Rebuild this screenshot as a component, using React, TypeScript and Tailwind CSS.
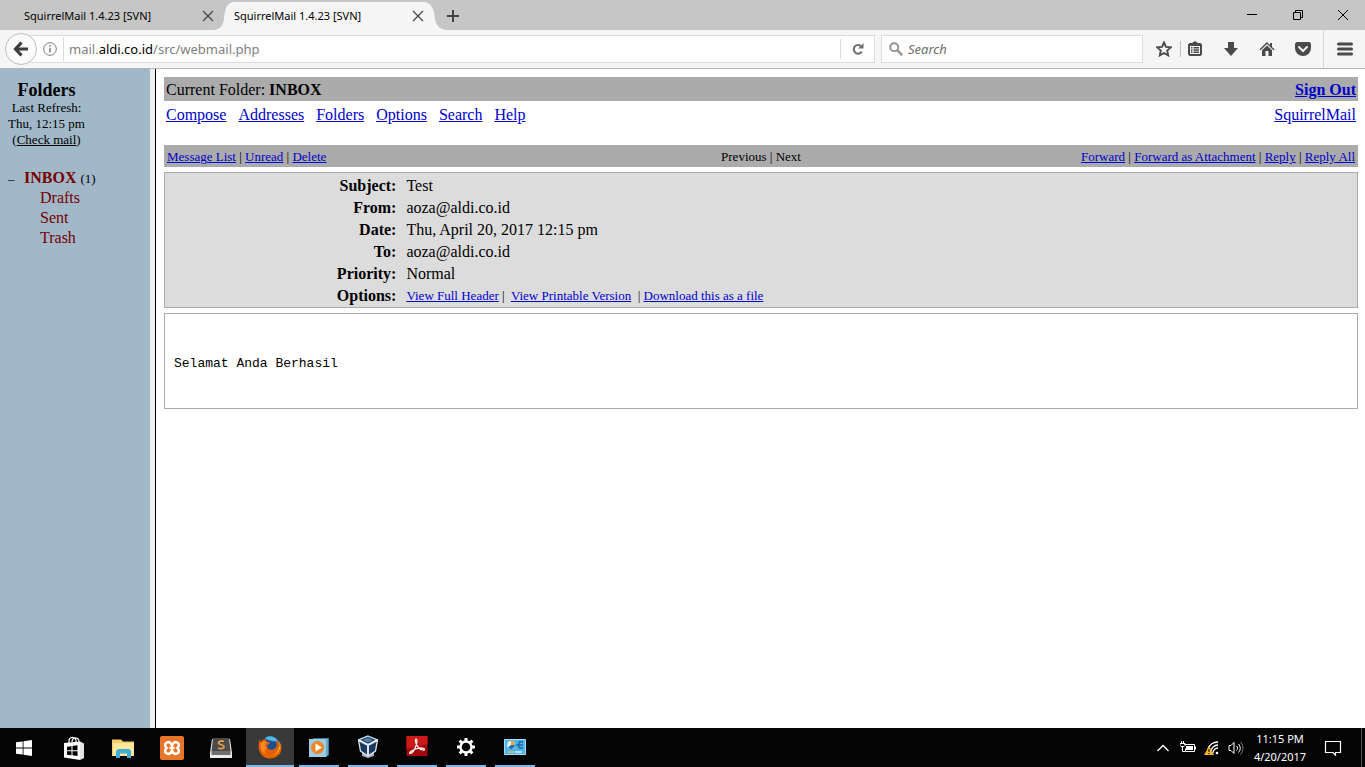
import React from 'react';

const folders = ['Drafts', 'Sent', 'Trash'];

const menuLinks = ['Compose', 'Addresses', 'Folders', 'Options', 'Search', 'Help'];

const messageHeaders = [
  { label: 'Subject:', value: 'Test' },
  { label: 'From:', value: 'aoza@aldi.co.id' },
  { label: 'Date:', value: 'Thu, April 20, 2017 12:15 pm' },
  { label: 'To:', value: 'aoza@aldi.co.id' },
  { label: 'Priority:', value: 'Normal' },
];

function CloseIcon() {
  return (
    <svg className="w-3 h-3" viewBox="0 0 12 12" fill="none" stroke="#444" strokeWidth="1.2">
      <path d="M1 1l10 10M11 1L1 11" />
    </svg>
  );
}

function TabStrip() {
  return (
    <div className="flex h-[30px] bg-[#c6c6c6] text-[11px] text-black">
      <div className="flex w-[214px] items-center justify-between pl-6 pt-0.5">
        <span className="whitespace-nowrap">SquirrelMail 1.4.23 [SVN]</span>
        <button aria-label="Close tab"><CloseIcon /></button>
      </div>
      <svg className="w-5 h-[30px] shrink-0" viewBox="0 0 20 30" fill="#f5f5f5">
        <path d="M0 30C6 29 9 26 10 19C11 9 12 3 20 2V30Z" />
      </svg>
      <div className="mt-0.5 flex w-[190px] items-center justify-between bg-[#f5f5f5]">
        <span className="whitespace-nowrap">SquirrelMail 1.4.23 [SVN]</span>
        <button aria-label="Close tab"><CloseIcon /></button>
      </div>
      <svg className="w-[22px] h-[30px] shrink-0" viewBox="0 0 22 30" fill="#f5f5f5">
        <path d="M0 2C8 3 10 9 11 19C12 26 16 29 22 30H0Z" />
      </svg>
      <button aria-label="New tab" className="pt-0.5">
        <svg className="w-3.5 h-3.5" viewBox="0 0 14 14" stroke="#444" strokeWidth="2">
          <path d="M7 1v12M1 7h12" />
        </svg>
      </button>
      <div className="ml-auto flex items-center">
        <button aria-label="Minimize" className="flex w-[46px] justify-center">
          <svg className="w-3 h-3" viewBox="0 0 12 12" stroke="#000"><path d="M1 5.5h10" /></svg>
        </button>
        <button aria-label="Restore" className="flex w-[46px] justify-center">
          <svg className="w-3 h-3" viewBox="0 0 12 12" fill="none" stroke="#000">
            <path d="M1.500 3.500h7v7h-7zM3.500 3.500v-2h7v7h-2" />
          </svg>
        </button>
        <button aria-label="Close" className="flex w-11 justify-center">
          <svg className="w-3 h-3" viewBox="0 0 12 12" stroke="#000"><path d="M1 1l10 10M11 1L1 11" /></svg>
        </button>
      </div>
    </div>
  );
}

function AddressBar() {
  return (
    <div className="flex h-[39px] items-center border-b border-[#b6b6b8] bg-[#f5f5f5] pl-[5px]">
      <button
        aria-label="Back"
        className="z-10 -mr-4 flex h-8 w-8 shrink-0 items-center justify-center rounded-full border border-[#bfbfbf] bg-[#fafafa]"
      >
        <svg className="w-4 h-4" viewBox="0 0 16 16" fill="none" stroke="#3d3d3d" strokeWidth="3.200">
          <path d="M8.500 1.500L2.500 8l6 6.500M3 8h12" />
        </svg>
      </button>
      <div className="flex h-7 flex-1 items-center border border-[#dcdcdc] bg-white pl-[21px]">
        <svg className="w-3.5 h-3.5" viewBox="0 0 14 14" fill="none" stroke="#7a7a7a">
          <circle cx="7" cy="7" r="6.300" />
          <path d="M7 6v4.500M7 3.200v1.600" strokeWidth="1.500" />
        </svg>
        <div className="ml-1.5 h-6 w-px bg-[#dcdcdc]"></div>
        <div className="ml-[5px] flex-1 pt-0.5 text-[13px] text-[#808080]">
          mail.<span className="text-black">aldi.co.id</span>/src/webmail.php
        </div>
        <button aria-label="Reload" className="flex h-5 w-[34px] items-center justify-center border-l border-[#dcdcdc]">
          <svg className="w-3 h-3" viewBox="0 0 12 12" fill="none" stroke="#737373" strokeWidth="2">
            <path d="M9 3.200A4.300 4.300 0 1 0 9.800 8.500" />
            <path d="M11.500 0v5.500H6z" fill="#737373" stroke="none" />
          </svg>
        </button>
      </div>
      <label className="ml-1.5 flex h-7 w-[262px] items-center border border-[#dcdcdc] bg-white pl-[7px]">
        <svg className="w-3.5 h-3.5 shrink-0" viewBox="0 0 14 14" fill="none" stroke="#959595" strokeWidth="2">
          <circle cx="5.200" cy="5.200" r="4" />
          <path d="M8.200 8.200l5 5" strokeWidth="2.600" />
        </svg>
        <input
          aria-label="Search"
          placeholder="Search"
          className="ml-[5px] w-full pt-0.5 text-[13px] italic outline-none placeholder:text-[#6b6b6b]"
        />
      </label>
      <div className="flex items-center self-stretch text-[#4a4a4a]">
        <button aria-label="Bookmark" className="ml-3 flex w-[18px] justify-center">
          <svg className="w-4 h-4" viewBox="0 0 16 16" fill="none" stroke="currentColor" strokeWidth="1.900">
            <path d="M8 1.500l2 4.400 4.800.5-3.600 3.200 1 4.800L8 12l-4.200 2.400 1-4.800L1.200 6.400 6 5.900z" />
          </svg>
        </button>
        <div className="ml-[7px] h-4 w-px bg-[#c0c0c0]"></div>
        <button aria-label="Bookmarks list" className="ml-1.5 flex w-4 justify-center">
          <svg className="w-3.5 h-4" viewBox="0 0 14 16" fill="currentColor">
            <path d="M4 2L7 0l3 2h2.500L14 3.500v10L12.500 15h-11L0 13.500v-10L1.500 2zM2 5v8h10V5z" fillRule="evenodd" />
            <path d="M3 6h1.500v1.400H3zM5.500 6H11v1.400H5.500zM3 8.300h1.500v1.400H3zM5.500 8.300H11v1.400H5.500zM3 10.600h1.500V12H3zM5.500 10.600H11V12H5.500z" />
          </svg>
        </button>
        <button aria-label="Downloads" className="ml-5 flex w-4 justify-center">
          <svg className="w-4 h-4" viewBox="0 0 16 16" fill="currentColor"><path d="M5 1h6v6h4l-7 8-7-8h4z" /></svg>
        </button>
        <button aria-label="Home" className="ml-5 flex w-4 justify-center">
          <svg className="w-4 h-4" viewBox="0 0 16 16" fill="currentColor">
            <path d="M8 1L0.500 8.300l1 1L8 3l6.500 6.300 1-1L13 5.900V2h-2v2z" />
            <path d="M8 4.500L3 9.300V15h3.500v-5h3v5H13V9.300z" />
          </svg>
        </button>
        <button aria-label="Pocket" className="ml-5 flex w-4 justify-center">
          <svg className="w-4 h-4" viewBox="0 0 16 16" fill="currentColor">
            <path d="M1.500 1h13L16 2.500V7a8 8 0 0 1-16 0V2.500z" />
            <path d="M4 6l4 4 4-4" fill="none" stroke="#f5f5f5" strokeWidth="2" strokeLinecap="round" />
          </svg>
        </button>
        <div className="ml-3 h-full w-px bg-[#d8d8d8]"></div>
        <button aria-label="Menu" className="ml-3 mr-[11px] flex w-[18px] justify-center">
          <svg className="w-4 h-3.5" viewBox="0 0 16 14" stroke="currentColor" strokeWidth="3" strokeLinecap="round">
            <path d="M1.500 2h13M1.500 7h13M1.500 12h13" />
          </svg>
        </button>
      </div>
    </div>
  );
}

function FolderSidebar() {
  return (
    <aside className="w-[150px] shrink-0 bg-[#a0b8c8] pt-[11px] pl-2 text-black">
      <div className="w-[77px] text-center text-[13px] leading-4 whitespace-nowrap">
        <h2 className="text-lg leading-5 font-bold">Folders</h2>
        <p>Last Refresh:</p>
        <p>Thu, 12:15 pm</p>
        <p>(<a href="#check" className="underline">Check mail</a>)</p>
      </div>
      <div className="mt-5 text-base leading-5 text-[#770000]">
        <div className="flex h-5 items-baseline">
          <button className="w-4 text-left text-[13px] text-black" aria-label="Collapse folder">–</button>
          <a href="#inbox" className="font-bold">INBOX</a>
          <span className="ml-1 text-[13px] leading-5 text-black">(1)</span>
        </div>
        <ul className="pl-8">
          {folders.map((folder) => (
            <li key={folder}><a href="#folder">{folder}</a></li>
          ))}
        </ul>
      </div>
    </aside>
  );
}

function Message() {
  return (
    <main className="min-w-0 flex-1 bg-white pt-2 pr-[7px] pl-2 text-base text-black">
      <div className="flex h-6 items-center justify-between bg-[#ababab] px-0.5 pt-0.5">
        <span>Current Folder: <b>INBOX</b></span>
        <a href="#signout" className="font-bold text-[#0000cc] underline">Sign Out</a>
      </div>
      <nav className="mt-px flex h-6 items-center gap-3 px-0.5 pt-px text-[#0000cc]">
        {menuLinks.map((link) => (
          <a key={link} href="#menu" className="underline">{link}</a>
        ))}
        <a href="#squirrelmail" className="ml-auto underline">SquirrelMail</a>
      </nav>

      {/* Message actions */}
      <div className="mt-[19px] grid h-[22px] grid-cols-3 items-center bg-[#ababab] px-[3px] pt-0.5 text-[13px] whitespace-nowrap">
        <div>
          <a href="#list" className="text-[#0000cc] underline">Message List</a> |{' '}
          <a href="#unread" className="text-[#0000cc] underline">Unread</a> |{' '}
          <a href="#delete" className="text-[#0000cc] underline">Delete</a>
        </div>
        <div className="text-center">Previous | Next</div>
        <div className="text-right">
          <a href="#forward" className="text-[#0000cc] underline">Forward</a> |{' '}
          <a href="#attachment" className="text-[#0000cc] underline">Forward as Attachment</a> |{' '}
          <a href="#reply" className="text-[#0000cc] underline">Reply</a> |{' '}
          <a href="#replyall" className="text-[#0000cc] underline">Reply All</a>
        </div>
      </div>

      {/* Message headers */}
      <div className="mt-[5px] border border-[#ababab] bg-[#dcdcdc] pt-0.5">
        <table className="w-full leading-[22px]">
          <tbody>
            {messageHeaders.map((row) => (
              <tr key={row.label}>
                <th className="w-1/5 p-0 pr-[7px] text-right font-bold">{row.label}</th>
                <td className="p-0 pl-[3px]">{row.value}</td>
              </tr>
            ))}
            <tr>
              <th className="w-1/5 p-0 pr-[7px] text-right font-bold">Options:</th>
              <td className="p-0 pl-[3px] text-[13px]">
                <a href="#full" className="text-[#0000cc] underline">View Full Header</a> |&nbsp;{' '}
                <a href="#print" className="text-[#0000cc] underline">View Printable Version</a>&nbsp; |{' '}
                <a href="#download" className="text-[#0000cc] underline">Download this as a file</a>
              </td>
            </tr>
          </tbody>
        </table>
      </div>

      {/* Message body */}
      <div className="mt-[5px] border border-[#ababab] px-[9px] pt-[43px] pb-[37px]">
        <pre className="font-['Liberation_Mono',monospace] text-[13px] leading-[14px]">Selamat Anda Berhasil</pre>
      </div>
    </main>
  );
}

function WindowsIcon() {
  return (
    <svg className="w-4 h-4" viewBox="0 0 16 16" fill="#fff">
      <path d="M0 2.300l6.700-.9v6.100H0zM7.500 1.300L16 0v7.500H7.500zM0 8.400h6.700v6.200L0 13.700zM7.500 8.400H16V16l-8.500-1.200z" />
    </svg>
  );
}

function StoreIcon() {
  return (
    <svg className="w-6 h-6" viewBox="0 0 24 24">
      <path d="M7 7V5c0-4 5-5 7-1v3M10 6c0-6 7-5 7 0" fill="none" stroke="#fff" strokeWidth="1.200" />
      <path d="M2 7l16-1.500V24L2 21.500z" fill="#fff" />
      <path d="M18 5.500l4 2V22l-4 2z" fill="#e4e4e4" />
      <path d="M5 10.800l4.500-.6v4H5zM10.500 10l5-.7v4.900h-5zM5 15.200h4.500v4L5 18.700zM10.500 15.200h5v4.800l-5-.7z" fill="#000" />
    </svg>
  );
}

function ExplorerIcon() {
  return (
    <svg className="w-6 h-6" viewBox="0 0 24 24">
      <path d="M1 3.500h9l2 2h11V20H1z" fill="#f3cf69" />
      <path d="M2 7h21v13H2z" fill="#ffe89b" />
      <path d="M5 22v-7l2-2h11l2 2v7h-4v-4.500H9V22z" fill="#3fb0d5" />
    </svg>
  );
}

function XamppIcon() {
  return (
    <svg className="w-6 h-6" viewBox="0 0 24 24">
      <rect width="24" height="24" rx="2" fill="#e9752b" />
      <path
        d="M12 9.500C11 6.500 9 5.500 7 6.500C4 8 5 11 7 12C5 13 4 16 7 17.500C9 18.500 11 17.500 12 14.500C13 17.500 15 18.500 17 17.500C20 16 19 13 17 12C19 11 20 8 17 6.500C15 5.500 13 6.500 12 9.500ZM9.500 12h5"
        fill="none"
        stroke="#fff"
        strokeWidth="2.500"
        strokeLinejoin="round"
      />
    </svg>
  );
}

function SublimeIcon() {
  return (
    <svg className="w-6 h-6" viewBox="0 0 24 24">
      <path d="M3 3h18l2 14v5H1v-5z" fill="#ededed" />
      <path d="M4 2h16l1.500 13h-19z" fill="#4b4b4b" />
      <path d="M2.500 15h19v4h-19z" fill="#6f6f6f" />
      <path d="M15 5.500C12.500 4.500 9.500 5 9.500 7s5.500 1.500 5.500 3.700-3.500 2.500-6 1.300" fill="none" stroke="#e5a04a" strokeWidth="1.800" />
    </svg>
  );
}

function FirefoxIcon() {
  return (
    <svg className="w-6 h-6" viewBox="0 0 24 24">
      <circle cx="12.500" cy="11" r="10" fill="#1c4f91" />
      <path d="M7 3c5-4 12-1 14 5-3-3-5-1-7-2s-4 0-7-3z" fill="#51b6e1" />
      <path
        d="M2 4c0 2 .5 2 1 3 1-2 3-3 5-3-1 2 1 3 4 3.500 0 2-3 2-3 3.500 0 4 5 5 8 2.500 3-2.500 2-6 0-8 5 1 5 4 4.500 7 1-1 1.300-3 1-5C26 17 20 23.500 12 23.500 3 23.500-2 14 2 4z"
        fill="#e66000"
      />
      <path d="M21 6c3 4 1 10-3 13-4 2.500-9 1-11-2 3 4 9 4.500 12 0 3-4 3-8 2-11z" fill="#ffc52b" />
      <path d="M3 8c-1 5 1 9 4 11-1-3 0-5 2-6-3-1-3-4 0-6-2-1-4-1-6 1z" fill="#f68c1f" />
    </svg>
  );
}

function MediaIcon() {
  return (
    <svg className="w-6 h-6" viewBox="0 0 24 24">
      <path d="M6 3h16v17l-3 2H6z" fill="#367e9e" />
      <path d="M2 4h17v18H2z" fill="#9dcbe2" />
      <path d="M19 4l2-1v17l-2 2z" fill="#69a8c4" />
      <circle cx="10.500" cy="12.500" r="6.500" fill="#f08424" />
      <path d="M8.500 8.500l6.500 4-6.500 4z" fill="#fff" />
    </svg>
  );
}

function VirtualBoxIcon() {
  return (
    <svg className="w-6 h-6" viewBox="0 0 24 24">
      <path d="M6 18h12v3l-6 2-6-2z" fill="#a3afba" />
      <path d="M12 1l9.500 4-2 11-7.500 5-7.500-5-2-11z" fill="#183a61" stroke="#dce7ef" strokeWidth="1.300" />
      <path d="M2.500 5L12 10l9.500-5M12 10v11" fill="none" stroke="#dce7ef" strokeWidth="2" />
      <path d="M7 5l5-2.500L17 5l-5 2.500z" fill="#507fae" />
    </svg>
  );
}

function AcrobatIcon() {
  return (
    <svg className="w-6 h-6" viewBox="0 0 24 24">
      <path d="M1.500 1h21v20h-21z" fill="#a50808" />
      <path d="M1.500 1h21v8l-21 5z" fill="#cc1a1a" />
      <path
        d="M11 4c1.500 0 1 4-.5 8-1.500 4-4 6.500-5.500 6.500s1-3 5.500-4.500 9-1 9 .5-3.500.5-6-2S9.500 4 11 4z"
        fill="none"
        stroke="#fff"
        strokeWidth="1.200"
      />
    </svg>
  );
}

function SettingsIcon() {
  return (
    <svg className="w-5 h-5" viewBox="0 0 20 20" fill="none" stroke="#fff">
      <circle cx="10" cy="10" r="5.500" strokeWidth="2.400" />
      <path
        d="M10 1v3M10 16v3M1 10h3M16 10h3M3.600 3.600l2.200 2.200M14.200 14.200l2.200 2.200M3.600 16.400l2.200-2.200M14.200 5.800l2.200-2.200"
        strokeWidth="3"
      />
    </svg>
  );
}

function ControlPanelIcon() {
  return (
    <svg className="w-6 h-6" viewBox="0 0 24 24">
      <path d="M1.500 4.500h21v15h-21z" fill="#4fb2e8" stroke="#a6dcf5" />
      <circle cx="8" cy="10" r="4" fill="#e8f6fd" />
      <path d="M8 10V6a4 4 0 0 1 4 4z" fill="#f3a52d" />
      <path d="M8 10h4a4 4 0 0 1-7 2.600z" fill="#1874b5" />
      <path d="M13 10h3M16 7v6M16 7h4M16 10h4M16 13h4" fill="none" stroke="#1769a6" strokeWidth="1.400" />
      <path d="M5 17h6" stroke="#f3c04d" strokeWidth="1.400" />
      <path d="M12 17h7" stroke="#e8f6fd" strokeWidth="1.400" />
    </svg>
  );
}

const pinnedApps = [
  { name: 'Store', icon: StoreIcon },
  { name: 'File Explorer', icon: ExplorerIcon },
  { name: 'XAMPP', icon: XamppIcon },
  { name: 'Sublime Text', icon: SublimeIcon },
];

const openApps = [
  { name: 'Media Player', icon: MediaIcon },
  { name: 'VirtualBox', icon: VirtualBoxIcon },
  { name: 'Acrobat Reader', icon: AcrobatIcon },
  { name: 'Settings', icon: SettingsIcon },
  { name: 'Control Panel', icon: ControlPanelIcon },
];

function Taskbar() {
  return (
    <footer className="flex h-[39px] items-stretch bg-[#040404] text-white">
      <div className="flex gap-px">
        <button aria-label="Start" className="flex w-12 items-center justify-center">
          <WindowsIcon />
        </button>
        <div className="ml-px flex gap-px">
          {pinnedApps.map((app) => (
            <button key={app.name} aria-label={app.name} className="flex w-12 items-center justify-center">
              <app.icon />
            </button>
          ))}
        </div>
        <button aria-label="Firefox" className="flex w-12 items-center justify-center border-b-2 border-[#76b9ed] bg-[#393939]">
          <FirefoxIcon />
        </button>
        {openApps.map((app) => (
          <button key={app.name} aria-label={app.name} className="mx-1 flex w-10 items-center justify-center border-b-2 border-[#76b9ed]">
            <app.icon />
          </button>
        ))}
      </div>
      <div className="ml-auto flex items-center">
        <button aria-label="Show hidden icons">
          <svg className="w-3.5 h-3.5" viewBox="0 0 14 14" fill="none" stroke="#fff" strokeWidth="1.300">
            <path d="M1.500 10L7 4.500l5.500 5.500" />
          </svg>
        </button>
        <button aria-label="Battery" className="ml-2.5">
          <svg className="w-4 h-4" viewBox="0 0 16 16" fill="none" stroke="#fff">
            <path d="M4.500 4.500h10v7h-9v-3M15.500 6.500v3M0 3.500h5v2l-1 1H1l-1-1zM1.500 1v2M3.500 1v2M2.500 7v4.500h3" />
            <path d="M6 6h7v4H6z" fill="#fff" stroke="none" />
          </svg>
        </button>
        <button aria-label="Network" className="ml-2">
          <svg className="w-4 h-4" viewBox="0 0 16 16" fill="none" stroke="#fff" strokeWidth="1.300">
            <path d="M4 9A10 10 0 0 1 14 2M7 11a7 7 0 0 1 7-6M9 13a5 5 0 0 1 5-5" />
            <circle cx="13" cy="13" r="1.300" fill="#fff" stroke="none" />
            <path d="M5 6L10 15H0z" fill="#f6b82c" stroke="none" />
            <path d="M5 9v3M5 13v1.200" stroke="#332200" />
          </svg>
        </button>
        <button aria-label="Volume" className="ml-2">
          <svg className="w-4 h-4" viewBox="0 0 16 16" fill="none" stroke="#fff">
            <path d="M1 5.500h2l3-3v11l-3-3H1zM8.500 6a3 3 0 0 1 0 4.500M10.500 4a6 6 0 0 1 0 8.500" />
            <path d="M12.500 2a9 9 0 0 1 0 12.500" stroke="#777" />
          </svg>
        </button>
        <div className="ml-1.5 w-[60px] text-center text-[11px] leading-[18px] whitespace-nowrap">
          <p>11:15 PM</p>
          <p>4/20/2017</p>
        </div>
        <button aria-label="Notifications" className="ml-3.5">
          <svg className="w-[18px] h-[18px]" viewBox="0 0 18 18" fill="none" stroke="#fff" strokeWidth="1.200">
            <path d="M1.500 2.500h15v11h-5V16L9 13.500H1.500z" />
          </svg>
        </button>
        <div className="ml-[19px] mr-[3px] h-full w-px bg-[#555]"></div>
      </div>
    </footer>
  );
}

export default function App() {
  return (
    <div className="flex min-h-screen flex-col bg-white">
      <header className="font-['Noto_Sans','Open_Sans',sans-serif]">
        <TabStrip />
        <AddressBar />
      </header>
      <div className="flex flex-1 font-['Liberation_Serif',serif]">
        <FolderSidebar />
        <div className="w-1.5 shrink-0 border-r border-black bg-[#f0f0f0]"></div>
        <Message />
      </div>
      <div className="font-['Noto_Sans','Open_Sans',sans-serif]">
        <Taskbar />
      </div>
    </div>
  );
}
